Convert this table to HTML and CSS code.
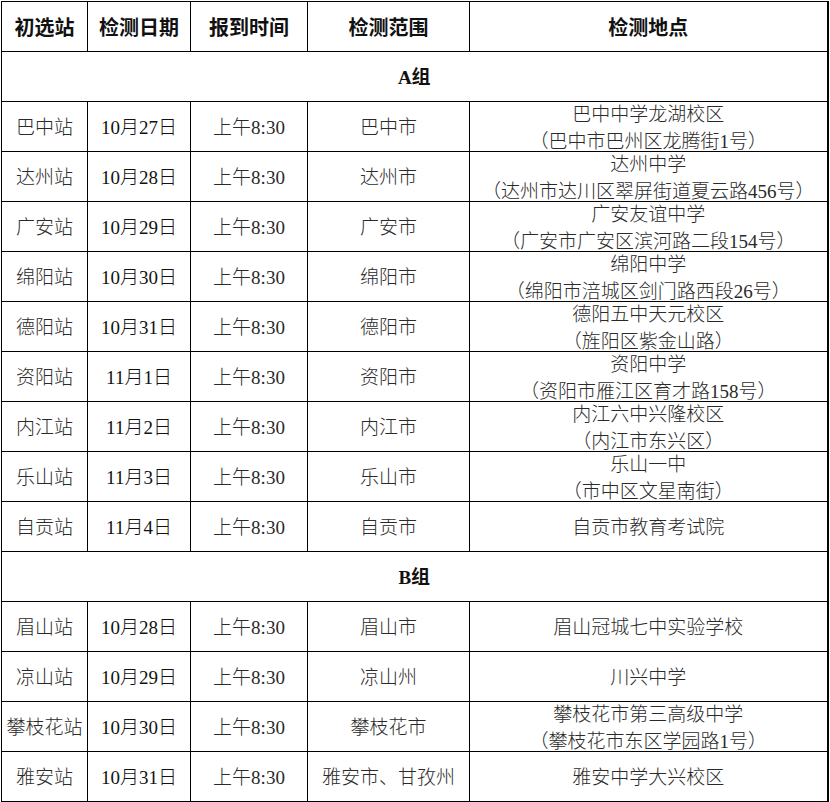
FILE: index.html
```html
<!DOCTYPE html>
<html lang="zh-CN">
<head>
<meta charset="utf-8">
<title>初选站安排</title>
<link rel="stylesheet" href="styles.css">
</head>
<body>
<table class="schedule">
  <colgroup>
    <col class="c1"><col class="c2"><col class="c3"><col class="c4"><col class="c5">
  </colgroup>
  <thead>
    <tr class="head">
      <th>初选站</th><th>检测日期</th><th>报到时间</th><th>检测范围</th><th>检测地点</th>
    </tr>
  </thead>
  <tbody>
    <tr class="group"><td colspan="5">A组</td></tr>
    <tr><td>巴中站</td><td>10月27日</td><td>上午8:30</td><td>巴中市</td><td><div class="two">巴中中学龙湖校区<br>（巴中市巴州区龙腾街1号）</div></td></tr>
    <tr><td>达州站</td><td>10月28日</td><td>上午8:30</td><td>达州市</td><td><div class="two">达州中学<br>（达州市达川区翠屏街道夏云路456号）</div></td></tr>
    <tr><td>广安站</td><td>10月29日</td><td>上午8:30</td><td>广安市</td><td><div class="two">广安友谊中学<br>（广安市广安区滨河路二段154号）</div></td></tr>
    <tr><td>绵阳站</td><td>10月30日</td><td>上午8:30</td><td>绵阳市</td><td><div class="two">绵阳中学<br>（绵阳市涪城区剑门路西段26号）</div></td></tr>
    <tr><td>德阳站</td><td>10月31日</td><td>上午8:30</td><td>德阳市</td><td><div class="two">德阳五中天元校区<br>（旌阳区紫金山路）</div></td></tr>
    <tr><td>资阳站</td><td>11月1日</td><td>上午8:30</td><td>资阳市</td><td><div class="two">资阳中学<br>（资阳市雁江区育才路158号）</div></td></tr>
    <tr><td>内江站</td><td>11月2日</td><td>上午8:30</td><td>内江市</td><td><div class="two">内江六中兴隆校区<br>（内江市东兴区）</div></td></tr>
    <tr><td>乐山站</td><td>11月3日</td><td>上午8:30</td><td>乐山市</td><td><div class="two">乐山一中<br>（市中区文星南街）</div></td></tr>
    <tr><td>自贡站</td><td>11月4日</td><td>上午8:30</td><td>自贡市</td><td>自贡市教育考试院</td></tr>
    <tr class="group"><td colspan="5">B组</td></tr>
    <tr><td>眉山站</td><td>10月28日</td><td>上午8:30</td><td>眉山市</td><td>眉山冠城七中实验学校</td></tr>
    <tr><td>凉山站</td><td>10月29日</td><td>上午8:30</td><td>凉山州</td><td>川兴中学</td></tr>
    <tr><td>攀枝花站</td><td>10月30日</td><td>上午8:30</td><td>攀枝花市</td><td><div class="two">攀枝花市第三高级中学<br>（攀枝花市东区学园路1号）</div></td></tr>
    <tr><td>雅安站</td><td>10月31日</td><td>上午8:30</td><td>雅安市、甘孜州</td><td>雅安中学大兴校区</td></tr>
  </tbody>
</table>
</body>
</html>
```

FILE: styles.css
```css
html, body {
  margin: 0;
  padding: 0;
  background: #fff;
}

.schedule {
  margin: 1px 0 0 1px;
  width: 827px;
  table-layout: fixed;
  border-collapse: collapse;
  font-family: "Liberation Serif", "Noto Sans CJK SC", serif;
  font-size: 19px;
  font-weight: 300;
  color: #2a2a2a;
}

.c1 { width: 86px; }
.c2 { width: 103px; }
.c3 { width: 117px; }
.c4 { width: 162px; }
.c5 { width: 358px; }

.schedule th,
.schedule td {
  border: 1px solid #000;
  height: 46px;
  padding: 3px 0 0;
  text-align: center;
  vertical-align: middle;
  white-space: nowrap;
  overflow: visible;
  line-height: 24px;
}

.schedule th {
  font-size: 20px;
  font-weight: 700;
  color: #111;
  height: 47px;
  padding-top: 2px;
}

.schedule .group td {
  font-weight: 700;
  color: #111;
}

.schedule td:nth-child(2) {
  color: #111;
}

.two {
  line-height: 27px;
  margin: -4px 0 -4px;
}

.schedule td:last-child,
.schedule th:last-child {
  border-right-width: 2px;
}
```
